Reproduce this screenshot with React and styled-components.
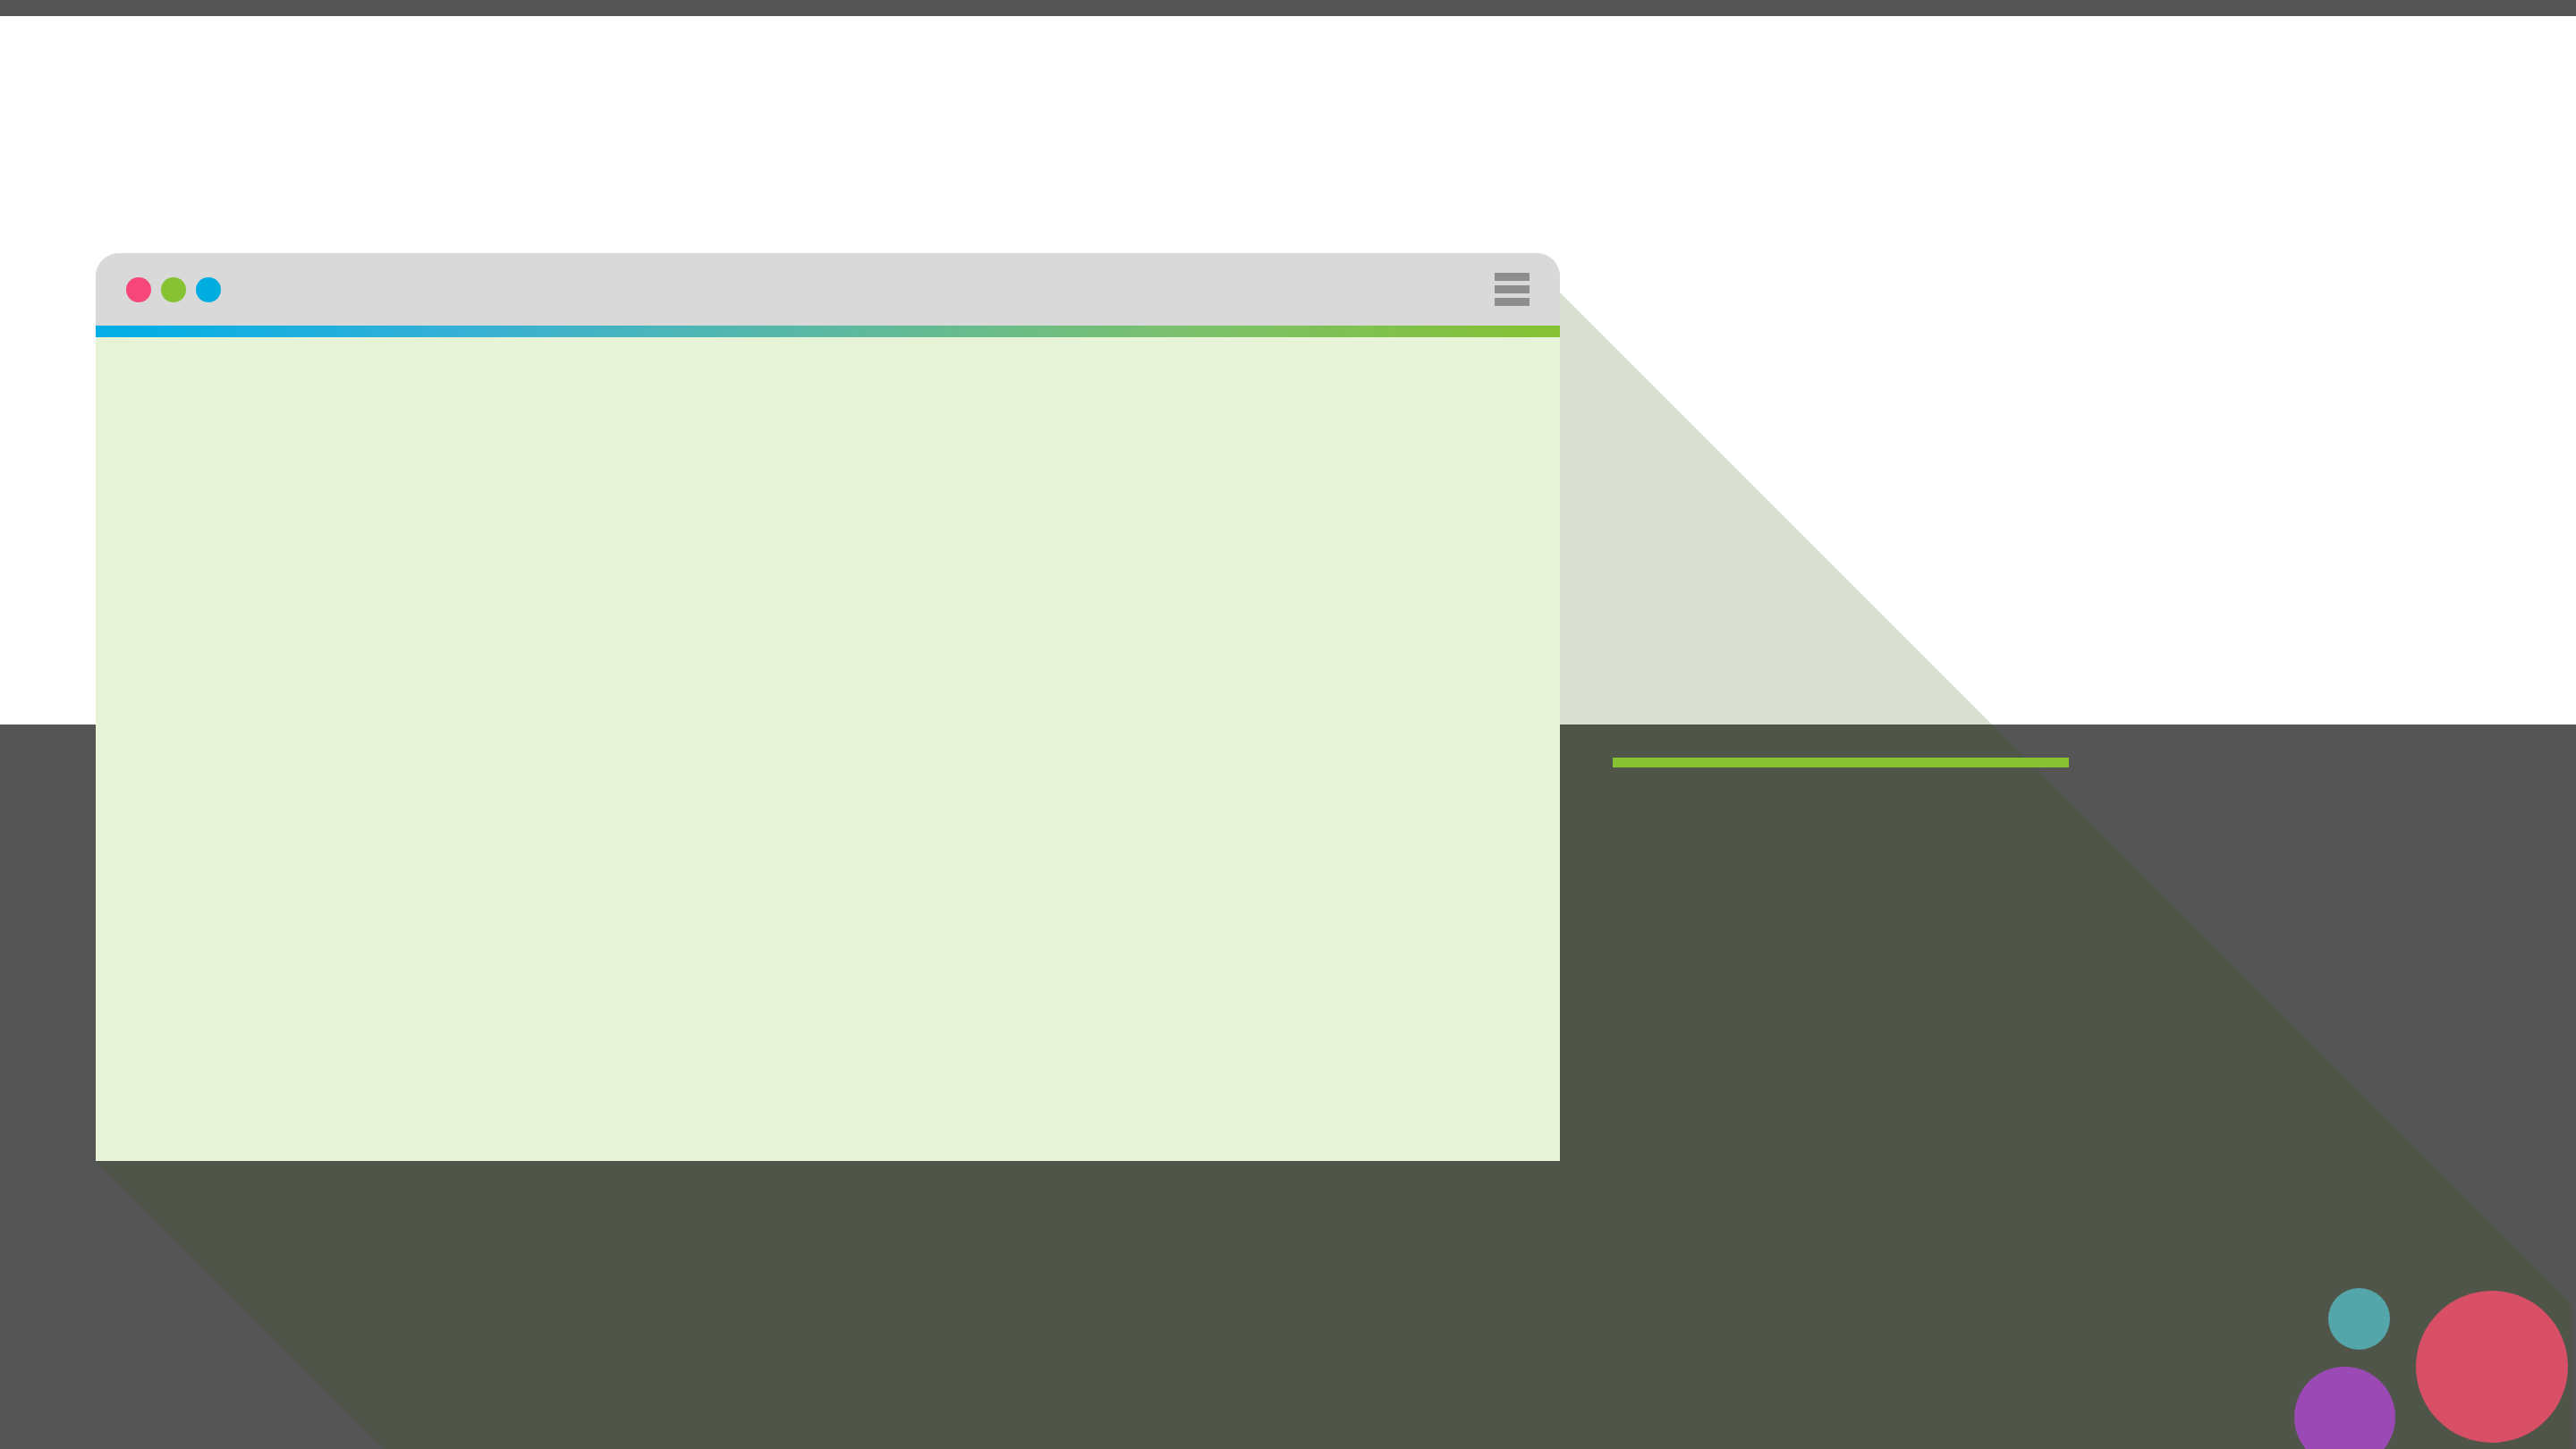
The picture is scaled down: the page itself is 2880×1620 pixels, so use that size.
import React from "react";
import styled, { createGlobalStyle } from "styled-components";

const GlobalStyle = createGlobalStyle`
  html, body {
    margin: 0;
    padding: 0;
    overflow: hidden;
    background: #555555;
    font-family: "Liberation Sans", Arial, sans-serif;
  }
`;

const Stage = styled.div`
  position: relative;
  width: 2880px;
  height: 1620px;
  overflow: hidden;
  background: linear-gradient(
    180deg,
    #555555 0 18px,
    #ffffff 18px 810px,
    #555555 810px 100%
  );
`;

const LongShadow = styled.svg`
  position: absolute;
  inset: 0;
  width: 100%;
  height: 100%;
  z-index: 0;
`;

const Scene = styled.div`
  position: relative;
  z-index: 1;
  display: flex;
  align-items: flex-start;
  gap: 59px;
  padding: 283px 0 0 107px;
`;

const Window = styled.div`
  width: 1637px;
  height: 1015px;
  display: flex;
  flex-direction: column;
  background: #e7f3d7;
  border-radius: 26px 26px 0 0;
  overflow: hidden;
`;

const TitleBar = styled.div`
  height: 81px;
  display: flex;
  align-items: center;
  justify-content: space-between;
  padding: 0 34px;
  background: #d9d9d9;
`;

const Dots = styled.div`
  display: flex;
  gap: 11px;
`;

const Dot = styled.span`
  width: 28px;
  height: 28px;
  border-radius: 50%;
  background: ${(p) => p.color};
`;

const Burger = styled.div`
  display: flex;
  flex-direction: column;
  gap: 5px;
  span {
    display: block;
    width: 39px;
    height: 9px;
    background: #8e8e8e;
  }
`;

const Progress = styled.div`
  height: 13px;
  background: linear-gradient(
    90deg,
    #00aee6 0%,
    #36b0d6 25%,
    #5cb9a2 50%,
    #7bc06b 75%,
    #86c232 100%
  );
`;

const Content = styled.div`
  flex: 1;
`;

const Side = styled.div`
  padding-top: 564px;
`;

const Rule = styled.div`
  width: 510px;
  height: 11px;
  background: #86c232;
`;

const Bubbles = styled.div`
  position: absolute;
  right: 0;
  bottom: 0;
  width: 320px;
  height: 185px;
  z-index: 2;
`;

const Bubble = styled.span`
  position: absolute;
  left: ${(p) => p.x}px;
  top: ${(p) => p.y}px;
  width: ${(p) => p.size}px;
  height: ${(p) => p.size}px;
  border-radius: 50%;
  background: ${(p) => p.color};
`;

export default function App() {
  return (
    <>
      <GlobalStyle />
      <Stage>
        <LongShadow viewBox="0 0 2880 1620" preserveAspectRatio="none">
          <polygon
            points="107,1298 1744,1298 1744,327 2875,1458 2875,1620 429,1620"
            fill="rgba(53, 85, 20, 0.19)"
          />
        </LongShadow>
        <Scene>
          <Window>
            <TitleBar>
              <Dots>
                <Dot color="#f7467a" />
                <Dot color="#86c232" />
                <Dot color="#00ade1" />
              </Dots>
              <Burger>
                <span />
                <span />
                <span />
              </Burger>
            </TitleBar>
            <Progress />
            <Content />
          </Window>
          <Side>
            <Rule />
          </Side>
        </Scene>
        <Bubbles>
          <Bubble x={43} y={5} size={69} color="#55a6ab" />
          <Bubble x={5} y={93} size={113} color="#9b4ab5" />
          <Bubble x={141} y={8} size={170} color="#d84f66" />
        </Bubbles>
      </Stage>
    </>
  );
}
